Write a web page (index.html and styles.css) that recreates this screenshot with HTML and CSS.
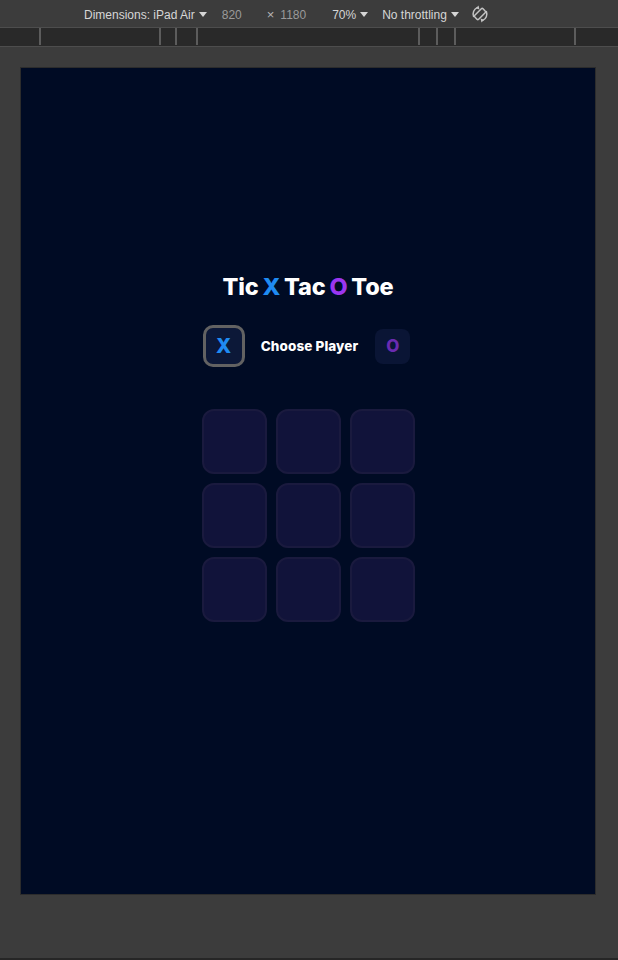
FILE: index.html
```html
<!DOCTYPE html>
<html>
<head>
<meta charset="utf-8">
<link rel="stylesheet" href="styles.css">
</head>
<body>
<div class="toolbar">
  <span class="tb-item dims">Dimensions: iPad Air <span class="caret"></span></span>
  <span class="tb-num w">820</span>
  <span class="tb-x">×</span>
  <span class="tb-num">1180</span>
  <span class="tb-item zoom">70% <span class="caret"></span></span>
  <span class="tb-item thr">No throttling <span class="caret"></span></span>
  <svg class="rotate" width="20" height="20" viewBox="0 0 20 20">
    <g fill="none" stroke="#c4c4c4" stroke-width="1.5" stroke-linecap="round">
      <rect x="7.3" y="4.2" width="5.4" height="11.6" rx="1.2" transform="rotate(45 10 10)"/>
      <path d="M3.6 12.4 A7 7 0 0 1 7.2 3.6"/>
      <path d="M16.4 7.6 A7 7 0 0 1 12.8 16.4"/>
    </g>
    <path d="M8.6 1.6 L9.4 5.4 L5.9 4.3 Z" fill="#c4c4c4"/>
    <path d="M11.4 18.4 L10.6 14.6 L14.1 15.7 Z" fill="#c4c4c4"/>
  </svg>
</div>
<div class="ruler">
  <span class="tick t1"></span><span class="tick t2"></span><span class="tick t3"></span><span class="tick t4"></span>
  <span class="tick t5"></span><span class="tick t6"></span><span class="tick t7"></span><span class="tick t8"></span>
</div>
<div class="stage">
  <div class="device">
    <h1 class="title">Tic <span class="bx">X</span> Tac <span class="bo">O</span> Toe</h1>
    <div class="choose">
      <div class="pick pick-x">X</div>
      <div class="choose-label">Choose Player</div>
      <div class="pick pick-o">O</div>
    </div>
    <div class="board">
      <div class="cell"></div><div class="cell"></div><div class="cell"></div>
      <div class="cell"></div><div class="cell"></div><div class="cell"></div>
      <div class="cell"></div><div class="cell"></div><div class="cell"></div>
    </div>
  </div>
</div>
<div class="bottom-line"></div>
</body>
</html>
```
FILE: styles.css
```css
html, body {
  margin: 0;
  padding: 0;
}
body {
  width: 618px;
  height: 960px;
  background: #3c3c3c;
  display: flex;
  flex-direction: column;
  overflow: hidden;
  font-family: "Liberation Sans", Arial, sans-serif;
}
.toolbar {
  height: 25px;
  padding-top: 2px;
  border-bottom: 1px solid #4d4d4d;
  display: flex;
  align-items: center;
  padding-left: 84px;
  color: #d6d6d6;
  font-size: 12px;
  white-space: nowrap;
}
.tb-item {
  display: flex;
  align-items: center;
}
.caret {
  display: inline-block;
  width: 0;
  height: 0;
  border-left: 4px solid transparent;
  border-right: 4px solid transparent;
  border-top: 5px solid #d6d6d6;
  margin-left: 4px;
}
.tb-num {
  color: #9a9a9a;
}
.tb-num.w {
  margin-left: 15px;
}
.tb-x {
  color: #b5b5b5;
  margin: 0 6px 0 25px;
  font-size: 13px;
}
.zoom {
  margin-left: 26px;
}
.thr {
  margin-left: 14px;
}
.rotate {
  margin-left: 11px;
  margin-top: -2px;
}
.ruler {
  height: 18px;
  background: #292929;
  border-bottom: 1px solid #4d4d4d;
  position: relative;
}
.tick {
  position: absolute;
  top: 0;
  width: 2px;
  height: 17px;
  background: #5c5c5c;
}
.t1 { left: 39px; }
.t2 { left: 159px; }
.t3 { left: 175px; }
.t4 { left: 196px; }
.t5 { left: 418px; }
.t6 { left: 436px; }
.t7 { left: 454px; }
.t8 { left: 574px; }
.stage {
  flex: 1;
  padding: 20px 0 0 20px;
}
.device {
  width: 574px;
  height: 826px;
  background: #000b24;
  border: 1px solid #2c2c2c;
  display: flex;
  flex-direction: column;
  align-items: center;
  font-family: "Inter", "Open Sans", sans-serif;
}
.title {
  margin: 204px 0 0 0;
  font-size: 23.5px;
  line-height: 30px;
  font-weight: 800;
  color: #ffffff;
  letter-spacing: -0.2px;
  word-spacing: -1px;
}
.bx {
  color: #1f8bf2;
}
.bo {
  color: #9b36f0;
}
.choose {
  margin-top: 23px;
  margin-right: 3px;
  display: flex;
  align-items: center;
}
.pick {
  display: flex;
  align-items: center;
  justify-content: center;
  font-weight: 800;
  box-sizing: border-box;
}
.pick-x {
  width: 42px;
  height: 42px;
  border: 3px solid #626262;
  border-radius: 10px;
  background: #0c1838;
  color: #1f8bf2;
  font-size: 20px;
}
.choose-label {
  color: #ffffff;
  font-weight: 800;
  font-size: 13.5px;
  letter-spacing: 0.1px;
  margin: 0 17px 0 16px;
}
.pick-o {
  width: 35px;
  height: 35px;
  border-radius: 8px;
  background: #0a1535;
  color: #6a2bb0;
  font-size: 17px;
}
.board {
  margin-top: 42px;
  margin-left: 1px;
  display: grid;
  grid-template-columns: repeat(3, 65px);
  grid-auto-rows: 65px;
  gap: 9px 9px;
}
.cell {
  background: #11133a;
  border: 2px solid #1a1a3e;
  border-radius: 12px;
}
.bottom-line {
  height: 2px;
  background: #262626;
}
```
